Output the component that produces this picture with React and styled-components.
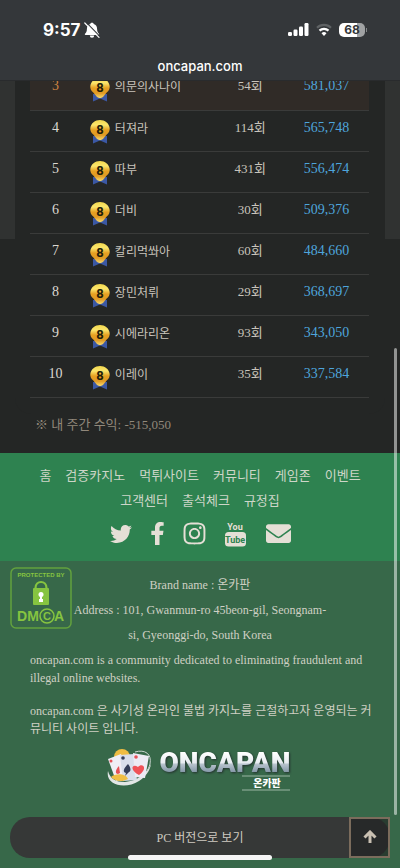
import React from 'react';
import styled, { createGlobalStyle } from 'styled-components';
import { FaTwitter, FaFacebookF, FaInstagram, FaEnvelope } from 'react-icons/fa';

const players = [
  { rank: 3, name: '의문의사나이', plays: 54, profit: '581,037' },
  { rank: 4, name: '터져라', plays: 114, profit: '565,748' },
  { rank: 5, name: '따부', plays: 431, profit: '556,474' },
  { rank: 6, name: '더비', plays: 30, profit: '509,376' },
  { rank: 7, name: '칼리먹쏴아', plays: 60, profit: '484,660' },
  { rank: 8, name: '장민처뤼', plays: 29, profit: '368,697' },
  { rank: 9, name: '시에라리온', plays: 93, profit: '343,050' },
  { rank: 10, name: '이레이', plays: 35, profit: '337,584' },
];

const links = [
  '홈',
  '검증카지노',
  '먹튀사이트',
  '커뮤니티',
  '게임존',
  '이벤트',
  '고객센터',
  '출석체크',
  '규정집',
];

const MutedBell = () => (
  <svg width='16' height='16' viewBox='0 0 16 16' aria-hidden='true'>
    <path
      d='M8 .8c-1 0-1.600.5-1.700 1.300C4 2.800 2.900 4.600 2.900 7c0 2.900-.9 3.700-1.900 4.700-.4.500-.2 1.200.5 1.200h13c.7 0 .9-.7.500-1.200-1-1-1.900-1.800-1.900-4.700 0-2.400-1.100-4.200-3.400-4.900C9.600 1.300 9 .8 8 .8z'
      fill='#fff'
    />
    <path d='M5.800 13.600h4.400a2.200 2.200 0 0 1-4.400 0z' fill='#fff' />
    <path d='M2 .2l13.700 14' stroke='#34373a' strokeWidth='1.200' />
    <path d='M.8 1l14.200 14.400' stroke='#fff' strokeWidth='1.200' strokeLinecap='round' />
  </svg>
);

const Signal = () => (
  <svg width='21' height='14' viewBox='0 0 21 14' fill='#fff' aria-hidden='true'>
    <rect x='0' y='9' width='4' height='4' rx='1.200' />
    <rect x='5.500' y='6.500' width='4' height='6.500' rx='1.200' />
    <rect x='11' y='3.500' width='4' height='9.500' rx='1.200' />
    <rect x='16.500' y='0' width='4' height='13' rx='1.200' />
  </svg>
);

const Wifi = () => (
  <svg width='16' height='14' viewBox='0 0 16 14' fill='none' aria-hidden='true'>
    <path d='M1 4.800a10 10 0 0 1 14 0' stroke='#5f6264' strokeWidth='2.200' />
    <path d='M3.500 7.600a6.500 6.500 0 0 1 9 0' stroke='#fff' strokeWidth='2.200' />
    <path d='M8 13l-2.500-2.700a3.500 3.500 0 0 1 5 0z' fill='#fff' />
  </svg>
);

const ArrowUp = () => (
  <svg width='14' height='14' viewBox='0 0 14 14' fill='none' aria-hidden='true'>
    <path d='M7 13V3M1.500 7.500L7 2l5.500 5.500' stroke='currentColor' strokeWidth='3' />
  </svg>
);

const Medal = () => (
  <svg width='20' height='24' viewBox='0 0 20 24' aria-hidden='true'>
    <defs>
      <linearGradient id='gold' x1='0' y1='0' x2='0' y2='1'>
        <stop offset='0' stopColor='#f3d84e' />
        <stop offset='0.250' stopColor='#fbe66c' />
        <stop offset='0.500' stopColor='#e6a022' />
        <stop offset='0.750' stopColor='#e09a24' />
        <stop offset='1' stopColor='#f8dd70' />
      </linearGradient>
    </defs>
    <path d='M3 16h14v7.500l-3.500-1.500L10 20.500l-3.500 1.500L3 23.500z' fill='#3b58a4' />
    <path
      d='M10 0C15 0 19 3.200 19.700 8c.3 2.500-1 5-3 6.500L13 19c-2 1.500-4 1.500-6 0l-3.700-4.500C1.300 13 0 10.500.3 8 1 3.200 5 0 10 0z'
      fill='url(#gold)'
    />
    <MedalText x='10' y='14'>
      8
    </MedalText>
  </svg>
);

const YouTube = () => (
  <svg width='21' height='26' viewBox='0 0 21 26' role='img' aria-label='YouTube'>
    <YouText x='10' y='9' fill='#e5dfd6'>
      You
    </YouText>
    <rect x='0' y='11' width='21' height='14.500' rx='3.500' fill='#e5dfd6' />
    <YouText x='10' y='22' fill='#2e8250'>
      Tube
    </YouText>
  </svg>
);

const Dmca = () => (
  <svg width='62' height='62' viewBox='0 0 62 62' role='img' aria-label='DMCA'>
    <rect x='1' y='1' width='60' height='60' rx='5' fill='none' stroke='#63a13e' strokeWidth='1.500' />
    <DmcaText x='31' y='10' $size={6}>
      PROTECTED BY
    </DmcaText>
    <path d='M25.500 21c0-8 11-8 11 0' fill='none' stroke='#86c440' strokeWidth='2.200' />
    <rect x='23' y='21' width='16' height='17' rx='1' fill='#86c440' />
    <circle cx='31' cy='27.500' r='2.500' fill='#fff' />
    <path d='M30 28h2v4h1v3h-4v-3h1z' fill='#fff' />
    <DmcaText x='18' y='54' $size={14}>
      DM
    </DmcaText>
    <circle cx='37' cy='49' r='7' fill='none' stroke='#86c440' strokeWidth='1.500' />
    <DmcaText x='37' y='53' $size={11}>
      C
    </DmcaText>
    <DmcaText x='49' y='54' $size={14}>
      A
    </DmcaText>
  </svg>
);

const Logo = () => (
  <svg width='186' height='46' viewBox='0 0 186 46' role='img' aria-label='ONCAPAN 온카판'>
    <defs>
      <linearGradient id='steel' x1='0' y1='0' x2='0' y2='1'>
        <stop offset='0.200' stopColor='#fff' />
        <stop offset='0.500' stopColor='#e8edf1' />
        <stop offset='0.560' stopColor='#b6c2cc' />
        <stop offset='0.800' stopColor='#8296a6' />
      </linearGradient>
    </defs>
    <path d='M28 5C38 2 45 7 43 17 40 29 26 39 8 35' fill='none' stroke='#cbd6d0' strokeWidth='1' />
    <path d='M1 24C-2 38 18 43 32 34 38 30 43 24 44 17 40 27 30 34 18 35 9 35 3 32 1 24z' fill='#e2e6e5' />
    <circle cx='15' cy='10' r='8' fill='#efbc43' />
    <path d='M1 12l13-5 8 24-13 3z' fill='#f0edf5' />
    <path d='M13 8l14-1 3 26-14 1z' fill='#d9deec' />
    <path d='M26 6l16 3-4 22-10-1z' fill='#edeaf4' />
    <circle cx='4' cy='14' r='1.500' fill='#e65157' />
    <circle cx='16' cy='11' r='1.800' fill='#343d59' />
    <circle cx='29' cy='10' r='1.800' fill='#e65157' />
    <path d='M12 19c-4 4-4 8-1 8l2-1z' fill='#e65157' />
    <path d='M21 17c-4 4-6 8-2 9l-1 3 4-4c3-1 1-6-1-8z' fill='#343d59' />
    <path d='M32 28c-10-5-7-12-1-8 4-5 11 1 1 8z' fill='#ef5158' />
    <path d='M4 30c4-4 15-4 17 2-5 3-13 3-17-2z' fill='#f0be45' />
    <LogoText x='118' y='25' fill='url(#steel)'>
      ONCAPAN
    </LogoText>
    <path d='M135 29h48M135 43h48' stroke='#9bb5a4' strokeWidth='1' />
    <LogoKorean x='160' y='40'>
      온카판
    </LogoKorean>
  </svg>
);

const App = () => (
  <Page>
    <GlobalStyle />
    <Header>
      <StatusBar>
        <Clock>
          9:57
          <MutedBell />
        </Clock>
        <StatusIcons>
          <Signal />
          <Wifi />
          <Battery>68</Battery>
        </StatusIcons>
      </StatusBar>
      <Address href='#'>oncapan.com</Address>
    </Header>

    <Ranking>
      <Card>
        <Table>
          <colgroup>
            <Col $width='15%' />
            <Col $width='40%' />
            <Col $width='20%' />
            <Col $width='25%' />
          </colgroup>
          <tbody>
            {players.map(({ rank, name, plays, profit }) => (
              <Row key={rank} $top={rank <= 3}>
                <Rank $top={rank <= 3}>{rank}</Rank>
                <Cell>
                  <Player>
                    <Medal />
                    <span>{name}</span>
                  </Player>
                </Cell>
                <Plays>{plays}회</Plays>
                <Profit>{profit}</Profit>
              </Row>
            ))}
          </tbody>
        </Table>
      </Card>
      <MyProfit>※ 내 주간 수익: -515,050</MyProfit>
    </Ranking>

    <FooterMenu>
      <Nav>
        {links.map((link) => (
          <NavLink key={link} href='#'>
            {link}
          </NavLink>
        ))}
      </Nav>
      <Socials>
        <SocialLink href='#' aria-label='Twitter'>
          <FaTwitter size={22} />
        </SocialLink>
        <SocialLink href='#' aria-label='Facebook' $width={14}>
          <FaFacebookF size={23} />
        </SocialLink>
        <SocialLink href='#' aria-label='Instagram'>
          <FaInstagram size={25} />
        </SocialLink>
        <SocialLink href='#'>
          <YouTube />
        </SocialLink>
        <SocialLink href='#' aria-label='Email' $width={25}>
          <FaEnvelope size={25} />
        </SocialLink>
      </Socials>
    </FooterMenu>

    <Footer>
      <DmcaLink href='#'>
        <Dmca />
      </DmcaLink>
      <Company>
        <p>Brand name : 온카판</p>
        <p>Address : 101, Gwanmun-ro 45beon-gil, Seongnam-si, Gyeonggi-do, South Korea</p>
      </Company>
      <About>
        <p>
          oncapan.com is a community dedicated to eliminating fraudulent and illegal online websites.
        </p>
        <p>
          oncapan.com 은 사기성 온라인 불법 카지노를 근절하고자 운영되는 커뮤니티 사이트 입니다.
        </p>
      </About>
      <LogoLink href='#'>
        <Logo />
      </LogoLink>
      <BottomBar>
        <PcButton type='button'>PC 버전으로 보기</PcButton>
        <TopButton type='button' aria-label='Top'>
          <ArrowUp />
        </TopButton>
      </BottomBar>
    </Footer>
    <Scrollbar />
    <HomeIndicator />
  </Page>
);

export default App;

const GlobalStyle = createGlobalStyle`
  * {
    box-sizing: border-box;
  }

  body {
    margin: 0;
    background: #376849;
    color: #c9c4bc;
    font-family: 'Liberation Serif', 'Noto Sans CJK KR', serif;
    font-size: 13px;
  }

  p {
    margin: 0;
  }

  a {
    color: inherit;
    text-decoration: none;
  }

  svg {
    display: block;
    flex-shrink: 0;
  }
`;
const Page = styled.div`
  position: relative;
`;
const Header = styled.header`
  position: sticky;
  top: 0;
  z-index: 2;
  height: 81px;
  padding-top: 18px;
  background: #34373a;
  border-bottom: 1px solid #292b2d;
  color: #fff;
  font-family: Inter, sans-serif;
`;
const StatusBar = styled.div`
  display: flex;
  justify-content: space-between;
  align-items: center;
  height: 24px;
  padding: 0 33px 0 43px;
`;
const Clock = styled.div`
  display: flex;
  align-items: center;
  gap: 4px;
  font-size: 17px;
  font-weight: 700;
`;
const StatusIcons = styled.div`
  display: flex;
  align-items: center;
  gap: 7px;
`;
const Battery = styled.div`
  position: relative;
  width: 26px;
  height: 14px;
  margin-right: 2px;
  border-radius: 5px;
  background: linear-gradient(to right, #fff 68%, #a0a2a3 68%);
  color: #34373a;
  font-size: 12px;
  font-weight: 700;
  line-height: 14px;
  text-align: center;

  &:after {
    content: '';
    position: absolute;
    top: 5px;
    right: -2px;
    width: 1px;
    height: 4px;
    background: #85888a;
  }
`;
const Address = styled.a`
  display: block;
  margin-top: 16px;
  font-size: 13px;
  font-weight: 500;
  line-height: 16px;
  text-align: center;
`;
const Ranking = styled.section`
  margin-top: -12px;
  padding: 0 15px 17px;
  background: linear-gradient(#303231 170px, #242625 170px);
`;
const Card = styled.div`
  padding: 0 16px 16px 15px;
  border-radius: 0 0 16px 16px;
  background: #242625;
`;
const Table = styled.table`
  width: 100%;
  table-layout: fixed;
  border-collapse: collapse;
`;
const Col = styled.col`
  width: ${({ $width }) => $width};
`;
const Row = styled.tr`
  height: 41px;
  border-bottom: 1px solid #3a3b3a;
  background: ${({ $top }) => ($top ? '#302b27' : 'transparent')};
`;
const Cell = styled.td`
  padding: 9px 0 0;
  line-height: 16px;
  text-align: center;
  vertical-align: top;
`;
const Rank = styled(Cell)`
  color: ${({ $top }) => ($top ? '#cd8544' : '#dcd8d1')};
  font-size: 14px;
`;
const Player = styled.div`
  display: flex;
  gap: 5px;
  padding-left: 9px;

  span {
    padding-top: 1px;
    font-size: 12px;
  }
`;
const Plays = styled(Cell)`
  color: #c9c4bc;
`;
const Profit = styled(Cell)`
  color: #4ea5dc;
  font-size: 14px;
`;
const MyProfit = styled.p`
  padding: 1px 20px;
  color: #91887b;
  line-height: 20px;
`;
const FooterMenu = styled.section`
  padding: 10px 20px;
  background: #2e8250;
`;
const Nav = styled.nav`
  display: flex;
  flex-wrap: wrap;
  justify-content: center;
  column-gap: 14px;
`;
const NavLink = styled.a`
  color: #cdd6c8;
  line-height: 25px;
`;
const Socials = styled.div`
  display: flex;
  justify-content: center;
  align-items: center;
  gap: 19px;
  height: 38px;
  padding-top: 4px;
`;
const SocialLink = styled.a`
  display: flex;
  justify-content: center;
  width: ${({ $width }) => $width || 22}px;
  color: #e5dfd6;
`;
const Footer = styled.footer`
  position: relative;
  padding: 12px 10px 10px;
  background: #376849;
  color: #cfd0c4;
  font-size: 12px;
`;
const DmcaLink = styled.a`
  position: absolute;
  top: 6px;
  left: 10px;
`;
const Company = styled.div`
  padding: 0 60px;
  line-height: 25px;
  text-align: center;
`;
const About = styled.div`
  display: flex;
  flex-direction: column;
  gap: 15px;
  padding: 3px 16px 9px 20px;
  line-height: 18px;

  p {
    word-break: break-all;
  }

  p:first-child {
    word-break: normal;
  }
`;
const LogoLink = styled.a`
  display: flex;
  justify-content: center;
`;
const BottomBar = styled.div`
  position: relative;
  margin-top: 24px;
`;
const PcButton = styled.button`
  display: block;
  width: 100%;
  height: 41px;
  border: 0;
  border-radius: 20px;
  background: #363837;
  color: #cfcac1;
  font: inherit;
`;
const TopButton = styled.button`
  position: absolute;
  top: 0;
  right: 0;
  display: flex;
  justify-content: center;
  align-items: center;
  width: 41px;
  height: 41px;
  border: 2px solid #7b6c5c;
  background: rgba(30, 32, 31, 0.6);
  color: #c9c0b2;
`;
const Scrollbar = styled.div`
  position: fixed;
  z-index: 3;
  top: 348px;
  right: 3px;
  width: 3px;
  height: 467px;
  border-radius: 2px;
  background: rgba(255, 255, 255, 0.5);
`;
const HomeIndicator = styled.div`
  position: fixed;
  z-index: 3;
  bottom: 8px;
  left: 32%;
  right: 32%;
  height: 5px;
  border-radius: 3px;
  background: #f5f5f5;
`;
const MedalText = styled.text`
  fill: #211c08;
  font-family: Roboto, sans-serif;
  font-size: 13px;
  font-weight: 700;
  text-anchor: middle;
`;
const YouText = styled.text`
  font-family: Roboto, sans-serif;
  font-size: 9px;
  font-weight: 700;
  text-anchor: middle;
`;
const DmcaText = styled.text`
  fill: #86c440;
  font-family: 'Liberation Sans', sans-serif;
  font-size: ${({ $size }) => $size}px;
  font-weight: 700;
  text-anchor: middle;
`;
const LogoText = styled.text`
  font-family: Roboto, sans-serif;
  font-size: 28px;
  font-weight: 900;
  text-anchor: middle;
  filter: drop-shadow(1px 1px 1px #24332f);
`;
const LogoKorean = styled.text`
  fill: #fff;
  font-family: 'Noto Sans CJK KR', sans-serif;
  font-size: 10px;
  font-weight: 900;
  text-anchor: middle;
`;
